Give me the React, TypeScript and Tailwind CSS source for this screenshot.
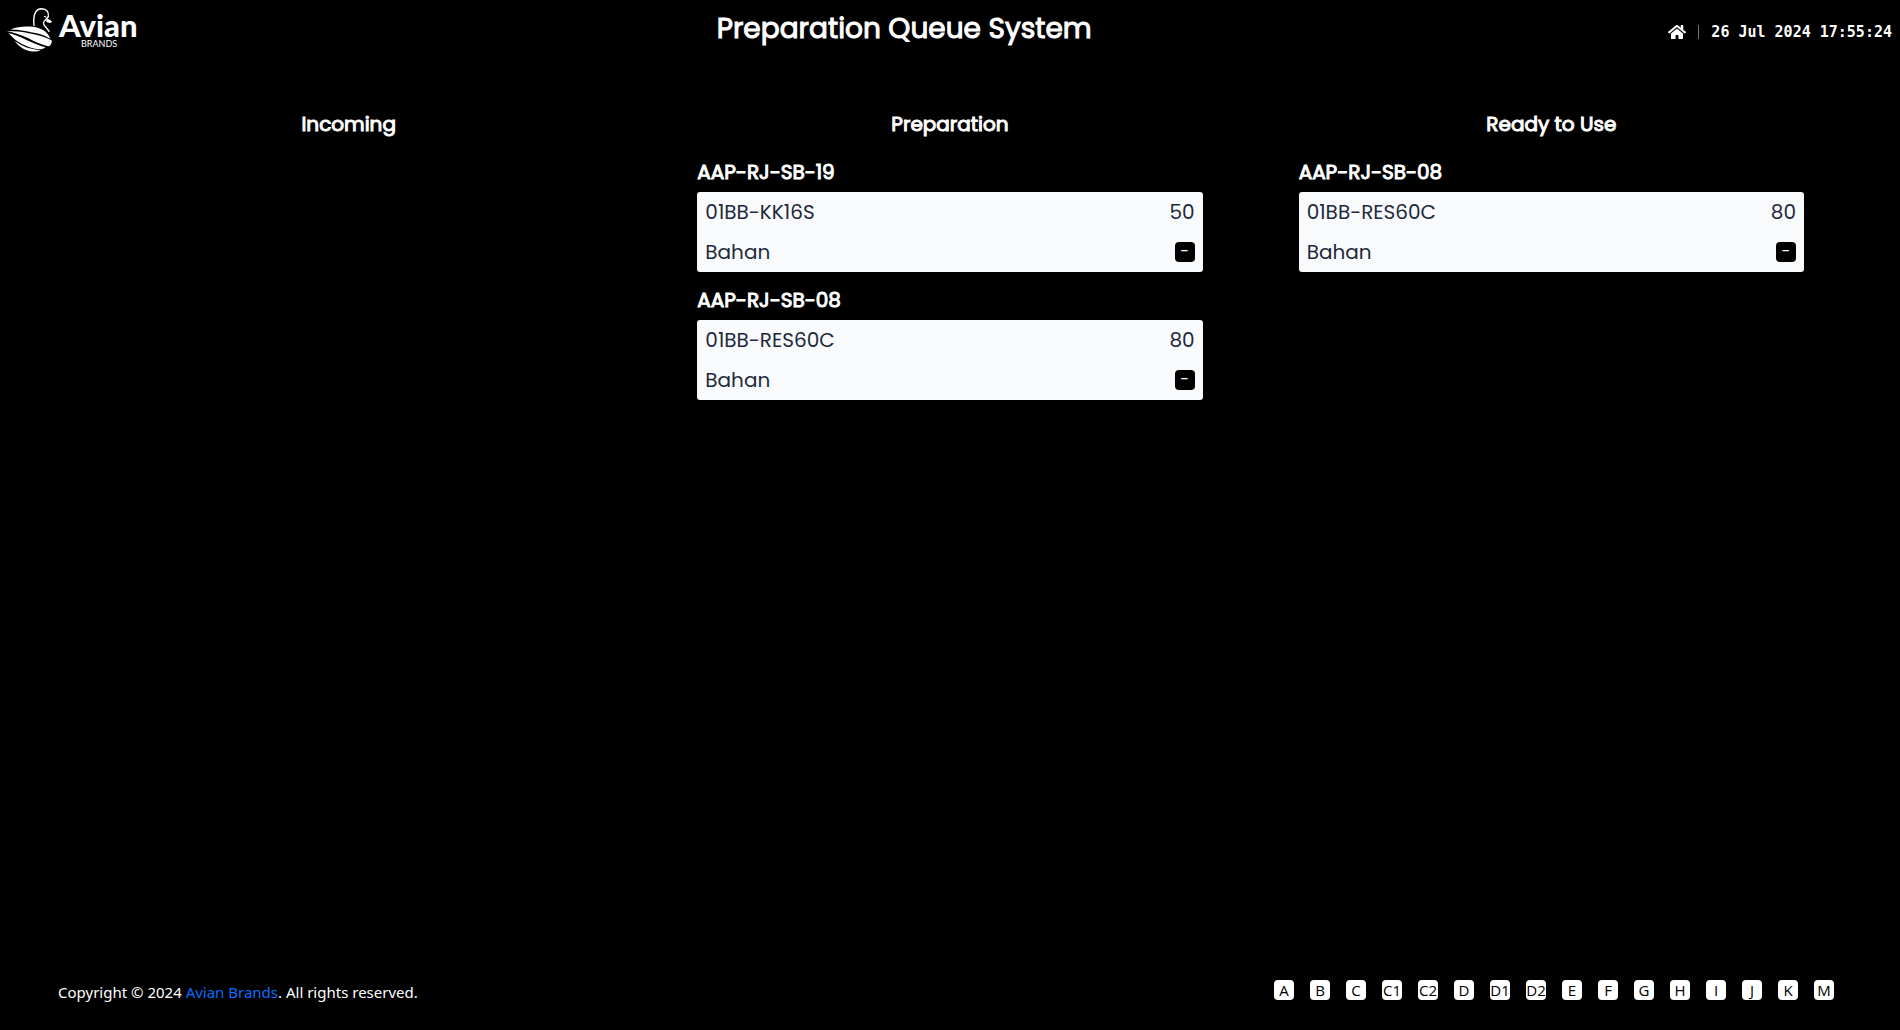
import React from 'react';
import { FaHome } from 'react-icons/fa';

type Item = { id: string; code: string; qty: number; material: string };

const columns: { title: string; items: Item[] }[] = [
  { title: 'Incoming', items: [] },
  {
    title: 'Preparation',
    items: [
      { id: 'AAP-RJ-SB-19', code: '01BB-KK16S', qty: 50, material: 'Bahan' },
      { id: 'AAP-RJ-SB-08', code: '01BB-RES60C', qty: 80, material: 'Bahan' },
    ],
  },
  {
    title: 'Ready to Use',
    items: [{ id: 'AAP-RJ-SB-08', code: '01BB-RES60C', qty: 80, material: 'Bahan' }],
  },
];

const lines = ['A', 'B', 'C', 'C1', 'C2', 'D', 'D1', 'D2', 'E', 'F', 'G', 'H', 'I', 'J', 'K', 'M'];

function Logo() {
  return (
    <svg viewBox="8 6 132 46" className="h-[46px] w-[132px] shrink-0 overflow-visible" role="img" aria-label="Avian Brands">
      <g fill="none" stroke="#fff" strokeLinecap="round">
        <path d="M34 25.500C33 16 35 8.800 41.500 8.700C47 8.800 49 12.500 48.300 16.500C47.500 19.500 43 20 43.500 23.500C44 26.500 47.500 28 49 31.500" strokeWidth="1.400" />
        <path d="M44.500 16.500L46 17" strokeWidth="1.300" />
      </g>
      <path d="M46.500 19.200C48.500 18.800 50.500 20 52 21.800C51 23 49 23.600 46.300 21.800Z" fill="#fff" />
      <g fill="#fff">
        <path d="M10.500 29.600C17 26.800 23 26.300 29 26.600C38 27 47.500 30 50.300 38.800C44 34.500 38 33.300 32 32.400C25 31.200 18 29.500 10.500 29.600Z" />
        <path d="M6.800 31C19 30.800 40 34 51.800 40.500C52 42.800 51 45 49 46.300C44 45.500 36 42.500 29 38.500C22 35 15 33 6.800 31Z" />
        <path d="M8.500 33C20 35.500 31 43.500 45.500 47.300C43.500 49 41 49.600 38.500 49.300C26 47.500 15.500 41.500 8.500 33Z" />
        <path d="M14.500 40.800C21 46 30 49.500 40.500 50.200C38 51.500 34 51.800 30.500 51.200C24.500 50.300 18.500 46.500 14.500 40.800Z" />
      </g>
      <text x="59" y="37" fill="#fff" fontFamily="Lato, sans-serif" fontWeight="900" fontSize="31">
        Avian
      </text>
      <text x="81" y="47" fill="#fff" fontFamily="Lato, sans-serif" fontWeight="400" fontSize="9">
        BRANDS
      </text>
    </svg>
  );
}

function QueueCard({ item }: { item: Item }) {
  return (
    <article className="mb-3.5">
      <h3 className="mb-1.5 text-xl leading-7 [-webkit-text-stroke:1px_white]">{item.id}</h3>
      <dl className="rounded-[3px] bg-[#f8fafc] px-2 text-xl text-[#1e293b]">
        <div className="flex h-10 items-center justify-between">
          <dt>{item.code}</dt>
          <dd>{item.qty}</dd>
        </div>
        <div className="flex h-10 items-center justify-between">
          <dt>{item.material}</dt>
          <dd className="flex size-5 items-center justify-center rounded bg-black text-base leading-4 text-white">-</dd>
        </div>
      </dl>
    </article>
  );
}

export default function App() {
  return (
    <div className="flex min-h-screen flex-col bg-black font-[Poppins,Inter,sans-serif] text-white">
      <header className="flex items-start justify-between px-2 pt-1.5">
        <Logo />
        <h1 className="text-[28px] leading-[46px] [-webkit-text-stroke:1px_white]">Preparation Queue System</h1>
        <div className="flex h-13 items-center">
          <a href="#" aria-label="Home">
            <FaHome className="size-[18px]" />
          </a>
          <span className="mx-3 h-3.5 w-px bg-[#6c757d]" />
          <time className="font-['DejaVu_Sans_Mono',monospace] text-[15px] font-bold">26 Jul 2024 17:55:24</time>
        </div>
      </header>

      <main className="grid flex-1 grid-cols-3 gap-24 px-24 pt-[50px]">
        {columns.map((col) => (
          <section key={col.title}>
            <h2 className="mb-[18px] text-center text-xl leading-8 [-webkit-text-stroke:1px_white]">{col.title}</h2>
            {col.items.map((item) => (
              <QueueCard key={item.id} item={item} />
            ))}
          </section>
        ))}
      </main>

      <footer className="flex items-start justify-between pr-[66px] pb-[26px] pl-[58px] font-['Noto_Sans','Open_Sans',sans-serif]">
        <p className="text-[15px] leading-6">
          Copyright © 2024{' '}
          <a href="#" className="text-[#0d6efd]">
            Avian Brands
          </a>
          . All rights reserved.
        </p>
        <nav className="flex gap-4" aria-label="Lines">
          {lines.map((line) => (
            <a
              key={line}
              href="#"
              className="flex size-5 items-center justify-center rounded bg-white font-['Open_Sans',sans-serif] text-[15px] leading-5 text-black"
            >
              {line}
            </a>
          ))}
        </nav>
      </footer>
    </div>
  );
}
